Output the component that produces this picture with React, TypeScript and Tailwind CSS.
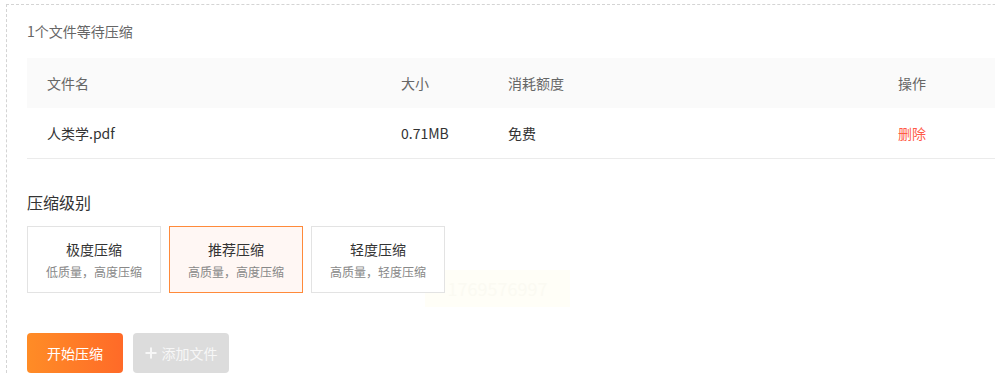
import { useState } from "react";

interface Level {
  key: string;
  title: string;
  desc: string;
}

const levels: Level[] = [
  { key: "max", title: "极度压缩", desc: "低质量，高度压缩" },
  { key: "rec", title: "推荐压缩", desc: "高质量，高度压缩" },
  { key: "light", title: "轻度压缩", desc: "高质量，轻度压缩" },
];

export default function App() {
  const [level, setLevel] = useState<string>("rec");

  return (
    <div
      className="relative h-[375px] w-[995px] overflow-hidden bg-white"
      style={{ fontFamily: '"Noto Sans CJK SC", "Noto Sans", sans-serif' }}
    >
      {/* watermark, sits under the content */}
      <div className="absolute left-[425px] top-[270px] flex h-[37px] w-[145px] items-center justify-center bg-[#fffef7] text-[18px] text-[#fbfaf2]">
        1769576997
      </div>

      <div className="relative ml-[6px] mt-[4px] w-[1200px] border-l border-t border-dashed border-[#d4d4d4] pl-[20px] pt-[16px]">
        <p className="h-[20px] text-[14px] leading-[20px] text-[#666]">1个文件等待压缩</p>

        {/* 文件列表 */}
        <div className="mt-[17px] text-[14px]">
          <div className="grid h-[50px] grid-cols-[354px_107px_390px_1fr] items-center bg-[#fafafa] text-[#666]">
            <div className="pl-[20px]">文件名</div>
            <div className="pl-[20px]">大小</div>
            <div className="pl-[20px]">消耗额度</div>
            <div className="pl-[20px]">操作</div>
          </div>
          <div className="grid h-[51px] grid-cols-[354px_107px_390px_1fr] items-center border-b border-[#ebebeb] text-[#333]">
            <div className="pl-[20px]">人类学.pdf</div>
            <div className="pl-[20px]">0.71MB</div>
            <div className="pl-[20px]">免费</div>
            <div className="pl-[20px]">
              <button className="text-[#ff5a48]">删除</button>
            </div>
          </div>
        </div>

        {/* 压缩级别 */}
        <p className="mt-[31px] h-[24px] text-[16px] leading-[24px] text-[#333]">压缩级别</p>
        <div className="mt-[12px] flex gap-[8px]">
          {levels.map((l) => (
            <button
              key={l.key}
              onClick={() => setLevel(l.key)}
              className={
                level === l.key
                  ? "flex h-[67px] w-[134px] flex-col items-center justify-center border border-[#ff8a3a] bg-[#fff7f4]"
                  : "flex h-[67px] w-[134px] flex-col items-center justify-center border border-[#e3e3e3] bg-white"
              }
            >
              <span className="text-[14px] leading-[20px] text-[#333]">{l.title}</span>
              <span className="mt-[4px] text-[12px] leading-[18px] text-[#888]">{l.desc}</span>
            </button>
          ))}
        </div>

        <div className="mt-[40px] flex gap-[10px]">
          <button className="h-[40px] w-[96px] rounded-[4px] bg-gradient-to-r from-[#ff8c26] to-[#ff6a28] text-[14px] text-white">
            开始压缩
          </button>
          <button className="flex h-[40px] w-[96px] items-center justify-center gap-[5px] rounded-[4px] bg-[#dcdcdc] text-[14px] text-[#f7f7f7]">
            <svg width="12" height="12" viewBox="0 0 12 12" fill="none">
              <path d="M6 0.5v11M0.5 6h11" stroke="#f7f7f7" strokeWidth="2" />
            </svg>
            添加文件
          </button>
        </div>
      </div>
    </div>
  );
}
